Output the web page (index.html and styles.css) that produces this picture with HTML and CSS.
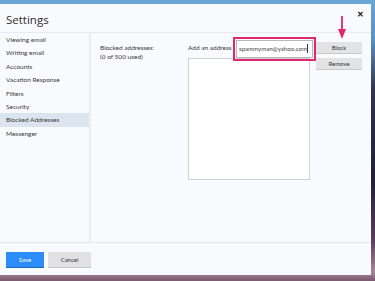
FILE: index.html
```html
<!DOCTYPE html>
<html lang="en">
<head>
    <meta charset="UTF-8">
    <meta name="viewport" content="width=device-width, initial-scale=1.0">
    <title>Settings</title>
    <link rel="stylesheet" href="styles.css">
</head>
<body>
    <div class="dialog">
        <div class="header">
            <h1>Settings</h1>
            <span class="close">&#x2715;</span>
        </div>
        <div class="main">
            <ul class="sidebar">
                <li>Viewing email</li>
                <li>Writing email</li>
                <li>Accounts</li>
                <li>Vacation Response</li>
                <li>Filters</li>
                <li>Security</li>
                <li class="active">Blocked Addresses</li>
                <li>Messenger</li>
            </ul>
            <div class="content">
                <div class="info">
                    <div>Blocked addresses:</div>
                    <div>(0 of 500 used)</div>
                </div>
                <div class="address">
                    <div class="add-row">
                        <label for="addr">Add an address</label>
                        <div class="input">spammyman@yahoo.com<span class="caret"></span></div>
                    </div>
                    <div class="listbox"></div>
                </div>
                <div class="actions">
                    <button class="btn block">Block</button>
                    <button class="btn">Remove</button>
                </div>
                <!-- annotation arrow -->
                <svg class="arrow" width="10" height="24" viewBox="0 0 10 24">
                    <path d="M5 0 L5 16" stroke="#e2266b" stroke-width="1.8" fill="none"/>
                    <path d="M1 13 L9 13 L5 23 Z" fill="#e2266b"/>
                </svg>
            </div>
        </div>
        <div class="footer">
            <button class="save">Save</button>
            <button class="cancel">Cancel</button>
        </div>
    </div>
</body>
</html>
```

FILE: styles.css
```css
body {
    margin: 0;
    height: 281px;
    overflow: hidden;
    font-family: Lato, "Open Sans", sans-serif;
    color: #333;
    background:
        linear-gradient(to bottom, #6aa6d6 0px, #5c8fc0 40px, #2e3450 90px, #241f38 180px, #5a3d5e 240px, #a88499 272px, #7a5a70 281px);
}
.dialog {
    width: 371px;
    height: 271px;
    margin-top: 4px;
    background-color: #f9fafd;
    display: flex;
    flex-direction: column;
}
.header {
    height: 28px;
    border-bottom: 1px solid #e7e9ee;
    display: flex;
    align-items: center;
    justify-content: space-between;
    padding: 0 7px 0 6px;
}
.header h1 {
    margin: 3px 0 0 0;
    font-family: "Open Sans", sans-serif;
    font-size: 11.5px;
    font-weight: normal;
    color: #2d2d2d;
}
.close {
    font-size: 8px;
    font-weight: bold;
    color: #111;
    margin-top: -9px;
}
.main {
    height: 209px;
    display: flex;
}
.sidebar {
    list-style: none;
    margin: 0;
    padding: 0;
    width: 89px;
    border-right: 2px solid #eaecf0;
}
.sidebar li {
    height: 13.4px;
    line-height: 13.4px;
    padding-left: 6px;
    font-size: 6.5px;
    color: #3a3a3a;
}
.sidebar li.active {
    background-color: #dce5ef;
}
.content {
    position: relative;
    flex: 1;
    display: flex;
    padding: 4px 0 0 9px;
}
.info {
    width: 88px;
    margin-top: 6px;
    font-size: 6.5px;
    line-height: 9px;
    color: #3a3a3a;
}
.address {
    width: 122px;
}
.add-row {
    height: 21px;
    display: flex;
    align-items: center;
    font-size: 6.5px;
    color: #3a3a3a;
}
.add-row label {
    width: 48px;
    flex-shrink: 0;
    white-space: nowrap;
}
.input {
    flex-shrink: 0;
    width: 73px;
    height: 16px;
    line-height: 16px;
    border: 1px solid #b8b8bc;
    background-color: #fff;
    outline: 2px solid #e2266b;
    outline-offset: 1px;
    padding-left: 2px;
    font-size: 6.1px;
    color: #444;
    margin-top: 2px;
    white-space: nowrap;
    overflow: hidden;
}
.caret {
    display: inline-block;
    width: 1px;
    height: 9px;
    background: #333;
    vertical-align: middle;
}
.listbox {
    height: 122px;
    border: 1px solid #cfd0d4;
    background-color: #fff;
    box-sizing: border-box;
}
.actions {
    margin-left: 6px;
    padding-top: 5px;
    display: flex;
    flex-direction: column;
    gap: 4px;
}
.btn {
    width: 46px;
    height: 12px;
    padding: 0;
    border: none;
    border-bottom: 1px solid #c9c9cc;
    background-color: #e3e3e6;
    font-family: inherit;
    font-size: 6px;
    color: #333;
}
.arrow {
    position: absolute;
    left: 246px;
    top: -17px;
}
.footer {
    flex: 1;
    border-top: 1px solid #e4e6eb;
    display: flex;
    align-items: flex-start;
    gap: 4px;
    padding: 9px 6px 0 6px;
}
.footer button {
    height: 16px;
    border: none;
    font-family: inherit;
    font-size: 6px;
    padding: 0;
}
.save {
    width: 38px;
    background-color: #2b8cfa;
    border-bottom: 1px solid #1c66c0 !important;
    color: #fff;
}
.cancel {
    width: 43px;
    background-color: #e1e1e4;
    border-bottom: 1px solid #c6c6ca !important;
    color: #333;
}
```
